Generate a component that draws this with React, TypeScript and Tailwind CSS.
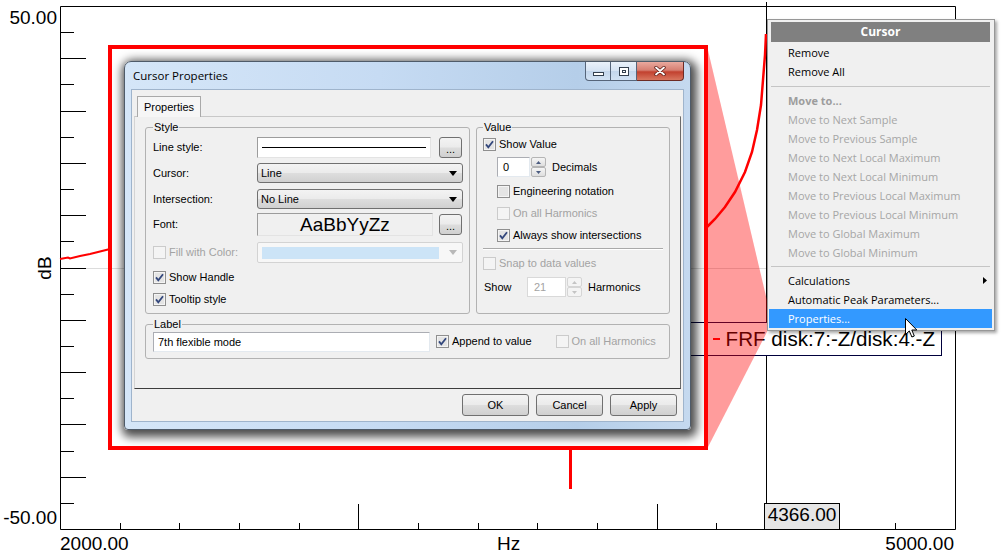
import React from "react";

type CheckProps = { checked?: boolean; disabled?: boolean };

const yTicks = Array.from({ length: 19 }, (_, i) => i + 1);
const xTicks = Array.from({ length: 14 }, (_, i) => i + 1);

const moveItems = [
  "Move to Next Sample",
  "Move to Previous Sample",
  "Move to Next Local Maximum",
  "Move to Next Local Minimum",
  "Move to Previous Local Maximum",
  "Move to Previous Local Minimum",
  "Move to Global Maximum",
  "Move to Global Minimum",
];

const btnBg =
  "bg-[linear-gradient(#f3f3f3,#ebebeb_48%,#dddddd_52%,#d0d0d0)] border border-[#707070] rounded-[3px]";

const Box = ({ checked = false, disabled = false }: CheckProps) => (
  <svg width="13" height="13" viewBox="0 0 13 13" className="shrink-0">
    <rect x="0.5" y="0.5" width="12" height="12" fill="#f4f4f4" stroke={disabled ? "#cbcbcb" : "#8f8f8f"} />
    {!disabled && <rect x="2" y="2" width="9" height="9" fill="#e4e4e4" />}
    {checked && <path d="M3 6.4 L5.3 9.3 L10 3.2" fill="none" stroke="#33477c" strokeWidth="1.8" />}
  </svg>
);

const CheckRow = ({
  label,
  checked,
  disabled,
  className = "",
}: CheckProps & { label: string; className?: string }) => (
  <div className={`flex h-[13px] items-center gap-[3px] leading-[13px] ${disabled ? "text-[#a3a3a3]" : ""} ${className}`}>
    <Box checked={checked} disabled={disabled} />
    <span className="whitespace-nowrap">{label}</span>
  </div>
);

const Combo = ({ text }: { text: string }) => (
  <div className={`flex h-[20px] w-[206px] items-center justify-between pl-[3px] pr-[5px] ${btnBg}`}>
    <span>{text}</span>
    <svg width="8" height="5" viewBox="0 0 8 5">
      <path d="M0 0H8L4 5Z" fill="#000" />
    </svg>
  </div>
);

const SpinBtn = ({ up, disabled }: { up?: boolean; disabled?: boolean }) => (
  <div
    className={`flex h-[10px] items-center justify-center rounded-[2px] border ${
      disabled ? "border-[#d5d5d5] bg-[#f4f4f4]" : "border-[#b5b5b5] bg-[linear-gradient(#f5f5f5,#dedede)]"
    }`}
  >
    <svg width="5" height="3" viewBox="0 0 5 3">
      <path d={up ? "M0 3H5L2.5 0Z" : "M0 0H5L2.5 3Z"} fill={disabled ? "#c4c4c4" : "#4c5c80"} />
    </svg>
  </div>
);

const Spin = ({ value, disabled, inputClass }: { value: string; disabled?: boolean; inputClass: string }) => (
  <div className="flex h-[20px]">
    <div
      className={`flex items-center border bg-white ${inputClass} ${
        disabled ? "border-[#d9d9d9] text-[#a3a3a3]" : "border-[#abadb3] border-b-[#e3e9ef] border-r-[#e3e9ef]"
      }`}
    >
      {value}
    </div>
    <div className="ml-px flex w-[15px] flex-col">
      <SpinBtn up disabled={disabled} />
      <SpinBtn disabled={disabled} />
    </div>
  </div>
);

const Chart = () => (
  <svg className="absolute left-0 top-0" width="1003" height="554" viewBox="0 0 1003 554">
    <line x1="86" y1="268.5" x2="766" y2="268.5" stroke="#dcdcdc" />
    <path d="M60.5 6.5H955.5V529.5H60.5Z" fill="none" stroke="#000" />
    {yTicks.map((k) => {
      const y = Math.round(6 + 26.15 * k) + 0.5;
      return <line key={k} x1="60" y1={y} x2={k % 2 === 0 ? 86 : 74} y2={y} stroke="#000" />;
    })}
    {xTicks.map((k) => {
      const x = Math.round(60 + 59.67 * k) + 0.5;
      return <line key={k} x1={x} y1={k % 5 === 0 ? 504 : 523} x2={x} y2="529" stroke="#000" />;
    })}
    <line x1="766.5" y1="2" x2="766.5" y2="503" stroke="#000" />
    <polyline
      points="60,259 68,257.5 70,258.5 80,256 90,254 100,251.5 110,249"
      fill="none"
      stroke="#ff0000"
      strokeWidth="2"
    />
    <polyline
      points="706,228 715,219 725,207 735,192 745,172 752,152 757,130 761,105 763,80 765,55 766,34"
      fill="none"
      stroke="#ff0000"
      strokeWidth="2.5"
    />
    <line x1="570.5" y1="446" x2="570.5" y2="489" stroke="#ff0000" strokeWidth="3" />
  </svg>
);

const AxisLabels = () => (
  <div className="text-[19px] leading-[20px]">
    <span className="absolute right-[946px] top-[8px]">50.00</span>
    <span className="absolute right-[946px] top-[508px]">-50.00</span>
    <span className="absolute left-[33px] top-[258px] w-[24px] -rotate-90 text-center">dB</span>
    <span className="absolute left-[60px] top-[534px]">2000.00</span>
    <span className="absolute left-[497px] top-[534px]">Hz</span>
    <span className="absolute right-[49px] top-[534px]">5000.00</span>
    <div className="absolute left-[764px] top-[503px] flex h-[27px] w-[76px] justify-center border border-black bg-[#e6e6e6] pt-px">
      4366.00
    </div>
  </div>
);

const Legend = () => (
  <div className="absolute left-[620px] top-[322px] flex h-[34px] w-[322px] items-center justify-end gap-[6px] border border-[#00003c] bg-white pr-[6px] text-[20.6px] leading-[24px]">
    <div className="h-[2px] w-[7px] bg-[#ff0000]" />
    <span className="whitespace-nowrap">FRF disk:7:-Z/disk:4:-Z</span>
  </div>
);

const Funnel = () => (
  <svg className="pointer-events-none absolute left-0 top-0" width="1003" height="554" viewBox="0 0 1003 554">
    <polygon points="707,46 769,309 769,328 707,449" fill="rgba(255,0,0,0.39)" />
  </svg>
);

const CaptionButtons = () => (
  <div className="mr-[6px] flex h-[19px]">
    <div className="flex w-[26px] items-start justify-center rounded-bl-[4px] border border-t-0 border-[#56657a] bg-[linear-gradient(#eaf1fa,#d5e3f3_50%,#c3d6ec_51%,#d2e2f4)]">
      <div className="mt-[10px] h-[4px] w-[11px] border border-[#34404f] bg-white" />
    </div>
    <div className="flex w-[26px] items-center justify-center border border-l-0 border-t-0 border-[#56657a] bg-[linear-gradient(#eaf1fa,#d5e3f3_50%,#c3d6ec_51%,#d2e2f4)]">
      <div className="flex h-[9px] w-[10px] items-center justify-center border border-[#34404f] bg-white">
        <div className="h-[3px] w-[4px] border border-[#34404f]" />
      </div>
    </div>
    <div className="flex w-[47px] items-center justify-center rounded-br-[4px] border border-l-0 border-t-0 border-[#6d2b24] bg-[linear-gradient(#eaa99e,#d67f72_45%,#c2412f_55%,#d8765f)]">
      <svg width="12" height="10" viewBox="0 0 12 10">
        <path d="M2 1.5L10 8.5M10 1.5L2 8.5" stroke="#5e1d16" strokeWidth="3.4" strokeLinecap="round" />
        <path d="M2 1.5L10 8.5M10 1.5L2 8.5" stroke="#fff" strokeWidth="1.8" strokeLinecap="round" />
      </svg>
    </div>
  </div>
);

const Dialog = () => (
  <div className="absolute left-[124px] top-[61px] flex h-[369px] w-[567px] flex-col rounded-b-[4px] rounded-t-[7px] border border-[#4f5b69] bg-[linear-gradient(90deg,#d5e6f8,#c6dbf3_45%,#b5cee9_80%,#c5d9ef)] text-[11px] shadow-[2px_3px_10px_4px_rgba(0,0,0,0.7)]">
    <div className="flex h-[27px] shrink-0 justify-between">
      <span className="pl-[8px] pt-[6px] font-['Open_Sans',sans-serif] text-[11.5px] leading-[16px]">Cursor Properties</span>
      <CaptionButtons />
    </div>
    <div className="mx-[6px] mb-[7px] flex flex-1 flex-col border border-[#9fb4cc] bg-[#f0f0f0] px-[2px] pt-[6px]">
      <div className="relative z-10 -mb-px ml-[3px] flex h-[21px] w-[64px] items-center justify-center border border-b-0 border-[#a9a9a9] bg-[#f6f6f6]">
        Properties
      </div>
      <div className="flex h-[273px] flex-col border border-b-[#3d3d3d] border-l-[#d4d4d4] border-r-[#6b6b6b] border-t-[#c8c8c8] px-[10px] pt-[4px]">
        <div className="flex gap-[6px]">
          <fieldset className="flex w-[325px] flex-col rounded-[3px] border border-[#b2b2b2] pb-[7px] pl-[7px] pr-[6px]">
            <legend className="px-px leading-[13px]">Style</legend>
            <div className="mt-[2px] flex h-[22px] items-center">
              <span className="w-[104px]">Line style:</span>
              <div className="flex h-[21px] w-[174px] items-center border border-b-[#e3e3e3] border-l-[#9c9c9c] border-r-[#e3e3e3] border-t-[#9c9c9c] bg-white px-[4px]">
                <div className="h-px flex-1 bg-black" />
              </div>
              <div className={`ml-[8px] flex h-[21px] w-[23px] items-end justify-center pb-[3px] leading-[9px] ${btnBg}`}>...</div>
            </div>
            <div className="mt-[5px] flex items-center">
              <span className="w-[104px]">Cursor:</span>
              <Combo text="Line" />
            </div>
            <div className="mt-[6px] flex items-center">
              <span className="w-[104px]">Intersection:</span>
              <Combo text="No Line" />
            </div>
            <div className="mt-[4px] flex items-center">
              <span className="w-[104px]">Font:</span>
              <div className="flex h-[23px] w-[176px] items-center justify-center border border-b-[#e3e3e3] border-l-[#9c9c9c] border-r-[#e3e3e3] border-t-[#9c9c9c] bg-[#f0f0f0] text-[19px] leading-[21px]">
                AaBbYyZz
              </div>
              <div className={`ml-[6px] flex h-[21px] w-[23px] items-end justify-center pb-[3px] leading-[9px] ${btnBg}`}>...</div>
            </div>
            <div className="mt-[6px] flex items-center">
              <div className="w-[104px]">
                <CheckRow label="Fill with Color:" disabled />
              </div>
              <div className="flex h-[21px] w-[206px] items-center justify-between rounded-[2px] border border-[#d3d3d3] bg-[#f7f7f7] pl-[4px] pr-[5px]">
                <div className="h-[12px] w-[177px] bg-[#cce4f7]" />
                <svg width="8" height="5" viewBox="0 0 8 5">
                  <path d="M0 0H8L4 5Z" fill="#b8b8b8" />
                </svg>
              </div>
            </div>
            <CheckRow label="Show Handle" checked className="mt-[8px]" />
            <CheckRow label="Tooltip style" checked className="mt-[9px]" />
          </fieldset>
          <fieldset className="flex w-[194px] flex-col rounded-[3px] border border-[#b2b2b2] pb-[7px] pl-[6px] pr-[6px]">
            <legend className="px-px leading-[13px]">Value</legend>
            <CheckRow label="Show Value" checked className="mt-[4px]" />
            <div className="mt-[6px] flex items-center pl-[14px]">
              <Spin value="0" inputClass="w-[33px] pl-[5px]" />
              <span className="ml-[6px]">Decimals</span>
            </div>
            <CheckRow label="Engineering notation" className="mt-[8px] pl-[14px]" />
            <CheckRow label="On all Harmonics" disabled className="mt-[9px] pl-[14px]" />
            <CheckRow label="Always show intersections" checked className="mt-[9px] pl-[14px]" />
            <div className="mt-[6px] h-[2px] border-b border-t border-b-white border-t-[#a9a9a9]" />
            <CheckRow label="Snap to data values" disabled className="mt-[7px]" />
            <div className="mt-[7px] flex items-center">
              <span className="w-[44px] pl-px">Show</span>
              <Spin value="21" disabled inputClass="w-[39px] pl-[6px]" />
              <span className="ml-[6px]">Harmonics</span>
            </div>
          </fieldset>
        </div>
        <fieldset className="mt-[4px] flex items-center rounded-[3px] border border-[#b2b2b2] pb-[6px] pl-[7px]">
          <legend className="px-px leading-[13px]">Label</legend>
          <div className="mt-px flex h-[20px] w-[277px] items-center border border-[#abadb3] border-b-[#e3e9ef] border-r-[#e3e9ef] bg-white pl-[4px]">
            7th flexible mode
          </div>
          <CheckRow label="Append to value" checked className="ml-[6px]" />
          <CheckRow label="On all Harmonics" disabled className="ml-[24px]" />
        </fieldset>
      </div>
      <div className="mt-[5px] flex justify-end gap-[7px] pr-[4px]">
        {["OK", "Cancel", "Apply"].map((b) => (
          <div key={b} className={`flex h-[22px] w-[67px] items-center justify-center ${btnBg}`}>
            {b}
          </div>
        ))}
      </div>
    </div>
  </div>
);

const Row = ({ children, className = "" }: { children: React.ReactNode; className?: string }) => (
  <div className={`ml-[1px] mr-[2px] flex h-[19px] items-center justify-between pl-[19px] pr-[5px] leading-[18px] ${className}`}>
    {children}
  </div>
);

const ContextMenu = () => (
  <div className="absolute left-[767px] top-[19px] flex h-[312px] w-[228px] flex-col border border-[#979797] bg-[#f0f0f0] pt-[2px] font-['Open_Sans',sans-serif] text-[11px] shadow-[2px_2px_3px_rgba(0,0,0,0.35)]">
    <div className="ml-[3px] mr-[4px] flex h-[20px] items-center justify-center bg-[#808080] text-[12px] font-bold text-white">
      Cursor
    </div>
    <div className="mt-px">
      <Row>Remove</Row>
      <Row>Remove All</Row>
      <div className="h-[10px] pt-[5px]">
        <div className="ml-[3px] mr-[4px] h-px bg-[#c5c5c5]" />
      </div>
      <Row className="font-bold text-[#9d9d9d]">Move to...</Row>
      {moveItems.map((m) => (
        <Row key={m} className="text-[#a6a6a6]">
          {m}
        </Row>
      ))}
      <div className="h-[9px] pt-[4px]">
        <div className="ml-[3px] mr-[4px] h-px bg-[#c5c5c5]" />
      </div>
      <Row>
        <span>Calculations</span>
        <svg width="4" height="7" viewBox="0 0 4 7">
          <path d="M0 0L4 3.5L0 7Z" fill="#000" />
        </svg>
      </Row>
      <Row>Automatic Peak Parameters...</Row>
      <Row className="bg-[#3399ff] text-white">Properties...</Row>
    </div>
  </div>
);

export default function App() {
  return (
    <div className="relative h-[554px] w-[1003px] overflow-hidden bg-white font-['Liberation_Sans',Arial,sans-serif] text-black">
      <Chart />
      <AxisLabels />
      <Legend />
      <Funnel />
      <Dialog />
      <div className="absolute left-[108px] top-[45px] h-[405px] w-[600px] border-4 border-[#ff0000]" />
      <ContextMenu />
      <svg className="absolute left-[905px] top-[318px]" width="13" height="21" viewBox="0 0 13 21">
        <path d="M0.5 0.5V16.5L4.3 12.9L6.9 19L9.3 18L6.8 12H11.8Z" fill="#fff" stroke="#000" strokeLinejoin="round" />
      </svg>
    </div>
  );
}
